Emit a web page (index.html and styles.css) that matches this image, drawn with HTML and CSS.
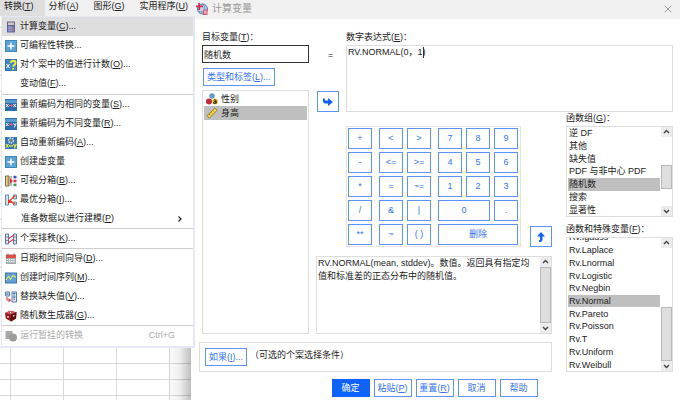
FILE: index.html
```html
<!DOCTYPE html>
<html lang="zh-CN">
<head>
<meta charset="utf-8">
<title>计算变量</title>
<link rel="stylesheet" href="styles.css">
</head>
<body>
<svg class="defs" aria-hidden="true">
  <symbol id="i-plus" viewBox="0 0 12 12"><path d="M0 0h12v12H0z" fill="#3f86bf"/><path d="M1 1h10v10H1z" fill="#5ba3d6"/><path d="M6 2.500v7M2.500 6h7" stroke="#fff" stroke-width="1.400"/></symbol>
  <symbol id="i-chev-up" viewBox="0 0 10 10"><path d="M2.500 6 5 3.500 7.500 6" fill="none" stroke="#444" stroke-width="1.400"/></symbol>
  <symbol id="i-chev-down" viewBox="0 0 10 10"><path d="M2.500 4 5 6.500 7.500 4" fill="none" stroke="#444" stroke-width="1.400"/></symbol>
</svg>
<div class="desktop">
  <div class="app">
    <nav class="menubar">
      <button class="menubar-item open">转换(<u>T</u>)</button>
      <button class="menubar-item">分析(<u>A</u>)</button>
      <button class="menubar-item">图形(<u>G</u>)</button>
      <button class="menubar-item">实用程序(<u>U</u>)</button>
    </nav>
    <div class="sheet"></div>
    <div class="menu">
      <div class="menu-group first">
        <button class="menu-item active"><svg class="icon" viewBox="0 0 12 12"><path d="M2 .5h8v11H2z" fill="#5d669c"/><path d="M3 1.500h6v2.500H3z" fill="#d9c6b0"/><path d="M3.500 5.500h1.200v1H3.500zM5.500 5.500h1.200v1H5.500zM3.500 7.300h1.200v1H3.500zM5.500 7.300h1.200v1H5.500zM3.500 9.200h1.200v1H3.500zM5.500 9.200h1.200v1H5.500z" fill="#e8ebff"/><path d="M7.500 5.500h1.200v1H7.500zM7.500 7.300h1.200v3H7.500z" fill="#d98a85"/></svg><span>计算变量(<u>C</u>)...</span></button>
        <button class="menu-item"><svg class="icon"><use href="#i-plus"/></svg><span>可编程性转换...</span></button>
        <button class="menu-item"><svg class="icon" viewBox="0 0 12 12"><path d="M0 0h12v12H0z" fill="#2f72b4"/><path d="M1 1h10v10H1z" fill="#4488c4"/><path d="M1.500 5 4.500 9M4.500 5 1.500 9" stroke="#fff" stroke-width="1"/><path d="M5.800 4c0-3 4.700-3 4.700 0 0 2-2.300 1.800-2.300 3.800M8.200 9v1.700" fill="none" stroke="#f5ee35" stroke-width="1.900"/></svg><span>对个案中的值进行计数(<u>O</u>)...</span></button>
        <button class="menu-item"><span class="icon"></span><span>变动值(<u>F</u>)...</span></button>
      </div>
      <div class="menu-group">
        <button class="menu-item"><svg class="icon" viewBox="0 0 12 12"><path d="M0 0h12v12H0z" fill="#2c6cab"/><path d="M0 1h12v3H0z" fill="#579bd2"/><path d="M1 5l2.500 3M3.500 5 1 8M8.500 5 11 8M11 5 8.500 8" stroke="#e8f1ff" stroke-width="1"/><path d="M4 6.500h3" stroke="#f05a6a" stroke-width="1.300"/><path d="M6 4.800 8.200 6.500 6 8.200z" fill="#f05a6a"/></svg><span>重新编码为相同的变量(<u>S</u>)...</span></button>
        <button class="menu-item"><svg class="icon" viewBox="0 0 12 12"><path d="M0 0h12v12H0z" fill="#2c6cab"/><path d="M0 1h12v3H0z" fill="#579bd2"/><path d="M1 5l2.500 3M3.500 5 1 8M8.500 5 10 7.500M11.300 5 9.300 9.500" stroke="#e8f1ff" stroke-width="1"/><path d="M4 6.500h3" stroke="#f05a6a" stroke-width="1.300"/><path d="M6 4.800 8.200 6.500 6 8.200z" fill="#f05a6a"/></svg><span>重新编码为不同变量(<u>R</u>)...</span></button>
        <button class="menu-item"><svg class="icon" viewBox="0 0 12 12"><path d="M0 0h12v12H0z" fill="#3678b4"/><circle cx="6" cy="3.500" r="2.300" fill="none" stroke="#d9dde2" stroke-width="1.800" stroke-dasharray="1.400 .7"/><circle cx="6" cy="3.500" r="1.500" fill="#73808c"/><path d="M1 7l2.500 3.500M3.500 7 1 10.500M4 8.800h4M8.500 7 10 9.500M11.300 7 9.300 11.300" stroke="#e9ed3e" stroke-width="1.200"/></svg><span>自动重新编码(<u>A</u>)...</span></button>
        <button class="menu-item"><svg class="icon"><use href="#i-plus"/></svg><span>创建虚变量</span></button>
        <button class="menu-item"><svg class="icon" viewBox="0 0 12 12"><path d="M.5 1h3.500v10H.5z" fill="#eadb85" stroke="#756747"/><path d="M2 3h2M2 5h2M2 7h2M2 9h2" stroke="#756747" stroke-width=".6"/><path d="M6 1v10" stroke="#777"/><path d="M5 3.500 8 6 5 8.500z" fill="#dc3434"/><path d="M8.500.8h3v2.600h-3z" fill="#3652b6"/><path d="M8.500 4.700h3v2.600h-3z" fill="#d33b55"/><path d="M8.500 8.600h3v2.600h-3z" fill="#3a9c4c"/></svg><span>可视分箱(<u>B</u>)...</span></button>
        <button class="menu-item"><svg class="icon" viewBox="0 0 12 12"><path d="M.5 1h3v10h-3zM8.500 1h3v4h-3zM8.500 8h3v3h-3z" fill="#d5e2ee" stroke="#628bb0"/><path d="M10.500 1.500 3.800 7.200M5 7l5 3" fill="none" stroke="#e34a28" stroke-width="1.500"/><path d="M3 5.500v4l4-1z" fill="#dd3829"/></svg><span>最优分箱(<u>I</u>)...</span></button>
        <button class="menu-item submenu"><span class="icon"></span><span>准备数据以进行建模(<u>P</u>)</span><svg class="chevron" viewBox="0 0 6 8"><path d="M1.500 1.500 4 4 1.500 6.500" fill="none" stroke="#222" stroke-width="1.200"/></svg></button>
      </div>
      <div class="menu-group">
        <button class="menu-item"><svg class="icon" viewBox="0 0 12 12"><path d="M.5 1h3v10h-3zM8.500 1h3v10h-3z" fill="#dce6f0" stroke="#57799f"/><path d="M3 6 9 2M3 10 9 6" stroke="#db4153" stroke-width="1.300"/><path d="M1 4h2M1 7.500h2M9 4h2M9 7.500h2" stroke="#57799f" stroke-width=".8"/></svg><span>个案排秩(<u>K</u>)...</span></button>
      </div>
      <div class="menu-group">
        <button class="menu-item"><svg class="icon" viewBox="0 0 12 12"><path d="M1 4h10v7H1z" fill="#a3a8ac"/><path d="M1 1.500h10v3.500H1z" fill="#e34b43"/><path d="M3 .5v2M9 .5v2" stroke="#777"/><path d="M2 6.700h8M2 8.700h8" stroke="#fff" stroke-width="1.200" stroke-dasharray="1.300 .8"/></svg><span>日期和时间向导(<u>D</u>)...</span></button>
        <button class="menu-item"><svg class="icon" viewBox="0 0 12 12"><path d="M0 .5h12v11H0z" fill="#3474b4"/><path d="M1 1.500h10v9H1z" fill="#639fd3"/><path d="M1 8 3.500 4.500 5.500 7 8 3.500 11 5.500" fill="none" stroke="#d8ea62" stroke-width="1.100"/></svg><span>创建时间序列(<u>M</u>)...</span></button>
        <button class="menu-item"><svg class="icon" viewBox="0 0 12 12"><path d="M.5 1h4v4h-4zM7 1h4.500v10H7z" fill="#dce8f5" stroke="#557fae"/><path d="M1.500 2l2 2M3.500 2l-2 2M8 2.500h2.500M8 6h2.500M9.200 2v7" stroke="#416eac" stroke-width=".8"/><path d="M2 6v3h2" fill="none" stroke="#d94c63" stroke-width="1.200"/><path d="M3.500 7 6.500 9.300 3.500 11.500z" fill="#d94c63"/></svg><span>替换缺失值(<u>V</u>)...</span></button>
        <button class="menu-item"><svg class="icon" viewBox="0 0 12 12"><path d="M0 3 5 .7l6.500 1.500-.5 6.300-5 3L.8 8.500z" fill="#8e1717"/><path d="M0 3 5 .7l6.500 1.500L6 4.500z" fill="#d65454"/><path d="M6 4.500 11.500 2.200 11 8.500l-5 3z" fill="#5d1010"/><circle cx="3" cy="6.800" r=".9" fill="#fff"/><circle cx="8.800" cy="5.800" r=".8" fill="#fff"/><circle cx="5.500" cy="2.500" r=".7" fill="#fff"/></svg><span>随机数生成器(<u>G</u>)...</span></button>
      </div>
      <div class="menu-group">
        <button class="menu-item" disabled><svg class="icon" viewBox="0 0 12 12"><path d="M.5 1h7v8h-7z" fill="#aaa"/><circle cx="8" cy="7.500" r="4" fill="#9c9c9c"/></svg><span>运行暂挂的转换</span><span class="shortcut">Ctrl+G</span></button>
      </div>
    </div>
  </div>

  <section class="dialog">
    <header class="titlebar">
      <svg class="app-icon" viewBox="0 0 12 12"><circle cx="6.500" cy="6" r="5" fill="#bcd3e9" stroke="#4b7cb2"/><path d="M3 8.500c2 1 6 .5 8-1.500M6.500 1c3 2 3 7 0 10" fill="none" stroke="#4b7cb2" stroke-width=".8"/><path d="M3.200 0v7M0 3.300h7" stroke="#d42a45" stroke-width="1.700"/><path d="M7 6.500h4.500V12H7z" fill="#dc5470"/><path d="M8 8.200h2.600M8 10h2.600" stroke="#fff" stroke-width=".8"/></svg>
      <h1>计算变量</h1>
      <button class="close" aria-label="关闭"><svg viewBox="0 0 8 8"><path d="M.7.7l6.600 6.600M7.300.7.700 7.300" stroke="#999"/></svg></button>
    </header>
    <div class="content">
      <div class="vars">
        <label class="caption" for="target">目标变量(<u>T</u>)：</label>
        <input id="target" class="target" type="text" value="随机数">
        <button class="btn type">类型和标签(<u>L</u>)...</button>
        <ul class="var-list" role="listbox" aria-label="变量">
          <li role="option"><svg viewBox="0 0 12 12"><circle cx="6" cy="3" r="2.700" fill="#5d9cc9"/><circle cx="3" cy="8.500" r="3" fill="#c22a32"/><circle cx="9" cy="8.500" r="2.900" fill="#e7c636"/><path d="M7.700 7.500c.5-.8 2.400-.8 2.400.5v2.500M10 8.800c-3-.3-3.200 1.900-1.400 1.700.8 0 1.400-.6 1.400-1.300" fill="none" stroke="#111" stroke-width="1"/></svg><span>性别</span></li>
          <li role="option" aria-selected="true"><svg viewBox="0 0 12 12"><path d="M1 8.800 8.800 1l2.400 2.300-7.900 7.900z" fill="#f4d640" stroke="#816c20" stroke-width=".8"/><path d="M3 7l1.200 1.200M4.800 5.200 6 6.400M6.600 3.400l1.200 1.200" stroke="#816c20" stroke-width=".8"/></svg><span>身高</span></li>
        </ul>
      </div>
      <div class="assign">
        <span class="equals">=</span>
        <button class="btn move" aria-label="移入"><svg viewBox="0 0 12 12"><path d="M1 2.500h2v2h3V2l5 4-5 4V7.500H3.500C2 7.500 1 6.500 1 5z" fill="#0f62fe"/></svg></button>
      </div>
      <div class="expression">
        <label class="caption" for="expr">数字表达式(<u>E</u>)：</label>
        <textarea id="expr" spellcheck="false">RV.NORMAL(0，1)</textarea>
        <i class="caret"></i>
      </div>
      <div class="middle">
        <div class="pad-row">
          <div class="keypad">
            <div class="keys one">
              <button class="btn">+</button><button class="btn">-</button><button class="btn">*</button><button class="btn">/</button><button class="btn">**</button>
            </div>
            <div class="keys two">
              <button class="btn">&lt;</button><button class="btn">&gt;</button>
              <button class="btn">&lt;=</button><button class="btn">&gt;=</button>
              <button class="btn">=</button><button class="btn">~=</button>
              <button class="btn">&amp;</button><button class="btn">|</button>
              <button class="btn">~</button><button class="btn">( )</button>
            </div>
            <div class="keys three">
              <button class="btn">7</button><button class="btn">8</button><button class="btn">9</button>
              <button class="btn">4</button><button class="btn">5</button><button class="btn">6</button>
              <button class="btn">1</button><button class="btn">2</button><button class="btn">3</button>
              <button class="btn zero">0</button><button class="btn">.</button>
              <button class="btn delete">删除</button>
            </div>
          </div>
          <button class="btn move" aria-label="上移"><svg viewBox="0 0 12 12"><path d="M6 1 10 5.500H7.500V9L6 11H4V9h1V5.500H2z" fill="#0f62fe"/></svg></button>
        </div>
        <div class="scroll-box description">
          <p>RV.NORMAL(mean, stddev)。数值。返回具有指定均值和标准差的正态分布中的随机值。</p>
          <div class="scrollbar"><svg><use href="#i-chev-up"/></svg><div class="track"><i class="thumb"></i></div><svg><use href="#i-chev-down"/></svg></div>
        </div>
      </div>
      <div class="functions">
        <div class="caption" id="group-label">函数组(<u>G</u>)：</div>
        <div class="scroll-box groups">
          <div class="viewport"><ul role="listbox" aria-labelledby="group-label">
            <li role="option">逆 DF</li><li role="option">其他</li><li role="option">缺失值</li><li role="option">PDF 与非中心 PDF</li><li role="option" aria-selected="true">随机数</li><li role="option">搜索</li><li role="option">显著性</li>
          </ul></div>
          <div class="scrollbar"><svg><use href="#i-chev-up"/></svg><div class="track"><i class="thumb"></i></div><svg><use href="#i-chev-down"/></svg></div>
        </div>
        <div class="caption" id="func-label">函数和特殊变量(<u>F</u>)：</div>
        <div class="scroll-box names">
          <div class="viewport"><ul role="listbox" aria-labelledby="func-label">
            <li role="option">Rv.Igauss</li><li role="option">Rv.Laplace</li><li role="option">Rv.Lnormal</li><li role="option">Rv.Logistic</li><li role="option">Rv.Negbin</li><li role="option" aria-selected="true">Rv.Normal</li><li role="option">Rv.Pareto</li><li role="option">Rv.Poisson</li><li role="option">Rv.T</li><li role="option">Rv.Uniform</li><li role="option">Rv.Weibull</li>
          </ul></div>
          <div class="scrollbar"><svg><use href="#i-chev-up"/></svg><div class="track"><i class="thumb"></i></div><svg><use href="#i-chev-down"/></svg></div>
        </div>
      </div>
      <div class="condition">
        <button class="btn">如果(<u>I</u>)...</button>
        <span>（可选的个案选择条件）</span>
      </div>
    </div>
    <footer class="actions">
      <button class="btn primary">确定</button>
      <button class="btn">粘贴(<u>P</u>)</button>
      <button class="btn">重置(<u>R</u>)</button>
      <button class="btn">取消</button>
      <button class="btn">帮助</button>
    </footer>
  </section>
</div>
</body>
</html>
```
FILE: styles.css
```css
* { box-sizing: border-box; }

body {
  margin: 0;
  font: 9px/13px "Liberation Sans", "Noto Sans CJK SC", sans-serif;
  color: #222;
  background: #fff;
}

button, input, textarea { font: inherit; color: inherit; margin: 0; padding: 0; border: 0; background: none; border-radius: 0; }
button { white-space: nowrap; }
ul { list-style: none; margin: 0; padding: 0; }
svg { display: block; flex: none; }
.defs { position: absolute; width: 0; height: 0; }

.desktop { display: grid; grid-template-columns: 191px 1fr; min-height: 100vh; }

/* Application behind the dialog */
.app { position: relative; display: flex; flex-direction: column; min-width: 0; }
.menubar { display: flex; background: #f0f0f0; height: 16px; }
.menubar-item { flex: none; padding: 0 11px 3px 4px; }
.menubar-item.open { background: #dedede; }
.menubar-item:last-child { padding-right: 0; }
.sheet {
  flex: 1;
  background:
    linear-gradient(to right, transparent 87%, #00000010 94%, #00000040),
    linear-gradient(#d8d8d8 1px, transparent 1px) 0 11px / 100% 16px,
    linear-gradient(to right, #d8d8d8 1px, #fff 1px) 10px 0 / 53px 100%;
}

.menu {
  position: absolute;
  z-index: 2;
  top: 16px;
  left: 1px;
  width: 194px;
  padding-bottom: 1px;
  background: #fff;
  border: 2px solid #e5e7f5;
  border-top-width: 1px;
  border-left-width: 1px;
}
.menu-group + .menu-group { border-top: 1px solid #ccc; }
.menu-group.first { padding-bottom: 1px; }
.menu-item { display: flex; align-items: center; gap: 3px; width: 100%; height: 19px; padding: 0 18px 0 3px; text-align: left; }
.menu-item.active { background: #dedede; }
.menu-item:disabled { color: #aaa; }
.menu-item .icon { flex: none; width: 12px; height: 12px; }
.menu-item.submenu { gap: 4px; padding-right: 10px; }
.chevron { width: 6px; height: 8px; margin-left: auto; }
.shortcut { margin-left: auto; }

/* Dialog */
.dialog { display: flex; flex-direction: column; min-width: 0; background: #fff; }
.titlebar { display: flex; align-items: center; gap: 4px; height: 19px; padding: 0 8px 2px 5px; background: #f1f1f1; color: #999; }
.titlebar h1 { margin: 0; font-size: 10px; font-weight: 400; line-height: 14px; }
.app-icon { width: 12px; height: 12px; }
.close { margin-left: auto; }
.close svg { width: 8px; height: 8px; }

.content {
  display: grid;
  grid-template-columns: 110px 37px 1fr 121px;
  grid-template-rows: 81px 222px auto;
  grid-template-areas:
    "vars assign expression expression"
    "vars middle middle functions"
    "condition condition condition functions";
  padding: 12px 7px 0 8px;
}
.caption { height: 14px; display: block; white-space: nowrap; }

.btn { border: 1px solid #5c93fb; background: #fff; color: #3473f2; text-align: center; }
.btn.primary { background: #0f62fe; border-color: #0f62fe; color: #fff; }
.btn.move { display: grid; place-items: center; width: 22px; height: 21px; }
.btn.move svg { width: 12px; height: 12px; }

.vars { grid-area: vars; display: flex; flex-direction: column; padding-left: 3px; }
.target { width: 100%; height: 18px; padding: 0 1px; border: 1px solid #333; }
.type { align-self: flex-start; height: 18px; margin: 5px 0 4px 1px; padding: 0 3px; }
.var-list { flex: 1; padding: 1px; border: 1px solid #ddd; }
.var-list li { display: flex; align-items: center; gap: 3px; height: 14px; padding-left: 2px; }
.var-list svg { width: 12px; height: 12px; }
[aria-selected="true"] { background: #bfbfbf; }

.assign { grid-area: assign; display: flex; flex-direction: column; justify-content: space-between; padding: 18px 0 0 8px; }
.equals { padding-left: 11px; }

.expression { grid-area: expression; position: relative; display: flex; flex-direction: column; }
.expression textarea { display: block; flex: 1; width: 100%; padding: 0 1px; border: 1px solid #ddd; resize: none; }
.caret { position: absolute; top: 16px; left: 77px; width: 1px; height: 11px; background: #333; }

.middle { grid-area: middle; display: flex; flex-direction: column; gap: 9px; padding: 14px 0 0 7px; }
.pad-row { display: flex; justify-content: space-between; align-items: flex-end; padding-left: 30px; }
.keypad { display: flex; gap: 7px; padding: 1px 2px 1px 1px; border: 1px solid #e4e4e4; }
.keys { display: grid; grid-auto-rows: 21px; gap: 3px 4px; }
.keys.one { grid-template-columns: 24px; }
.keys.two { grid-template-columns: repeat(2, 24px); }
.keys.three { grid-template-columns: repeat(3, 24px); }
.zero { grid-column: span 2; }
.delete { grid-column: span 3; }

.scroll-box { display: flex; border: 1px solid #ddd; min-height: 0; }
.scrollbar { display: flex; flex-direction: column; flex: none; width: 11px; }
.scrollbar svg { width: 11px; height: 10px; background: #ececec; }
.track { flex: 1; display: flex; flex-direction: column; }
.thumb { background: #dedede; border: 1px solid #b8b8b8; flex: 1; }
.description { flex: 1; }
.description p { flex: 1; margin: 0; padding: 0 8px 0 1px; }

.functions { grid-area: functions; display: flex; flex-direction: column; padding-left: 14px; }
.viewport { flex: 1; overflow: hidden; padding: 0 1px; display: flex; flex-direction: column; }
.viewport ul { flex: 1; display: grid; grid-auto-rows: 1fr; }
.viewport li { display: flex; align-items: center; padding-left: 1px; white-space: nowrap; line-height: 12px; }
.groups { height: 91px; margin-bottom: 6px; }
.groups .track { padding: 28px 0 17px; }
.names { flex: 1; }
.names ul { margin-top: -7px; }
.names .track { padding-top: 59px; }

.condition { grid-area: condition; display: flex; align-items: flex-start; gap: 3px; height: 30px; margin-top: 8px; padding: 5px; border: 1px solid #ddd; }
.condition .btn { height: 18px; padding: 0 3px; }
.condition span { padding-top: 1px; }

.actions { display: flex; justify-content: center; gap: 4px; padding: 7px 2px 0 0; }
.actions .btn { width: 38px; height: 18px; }
```
